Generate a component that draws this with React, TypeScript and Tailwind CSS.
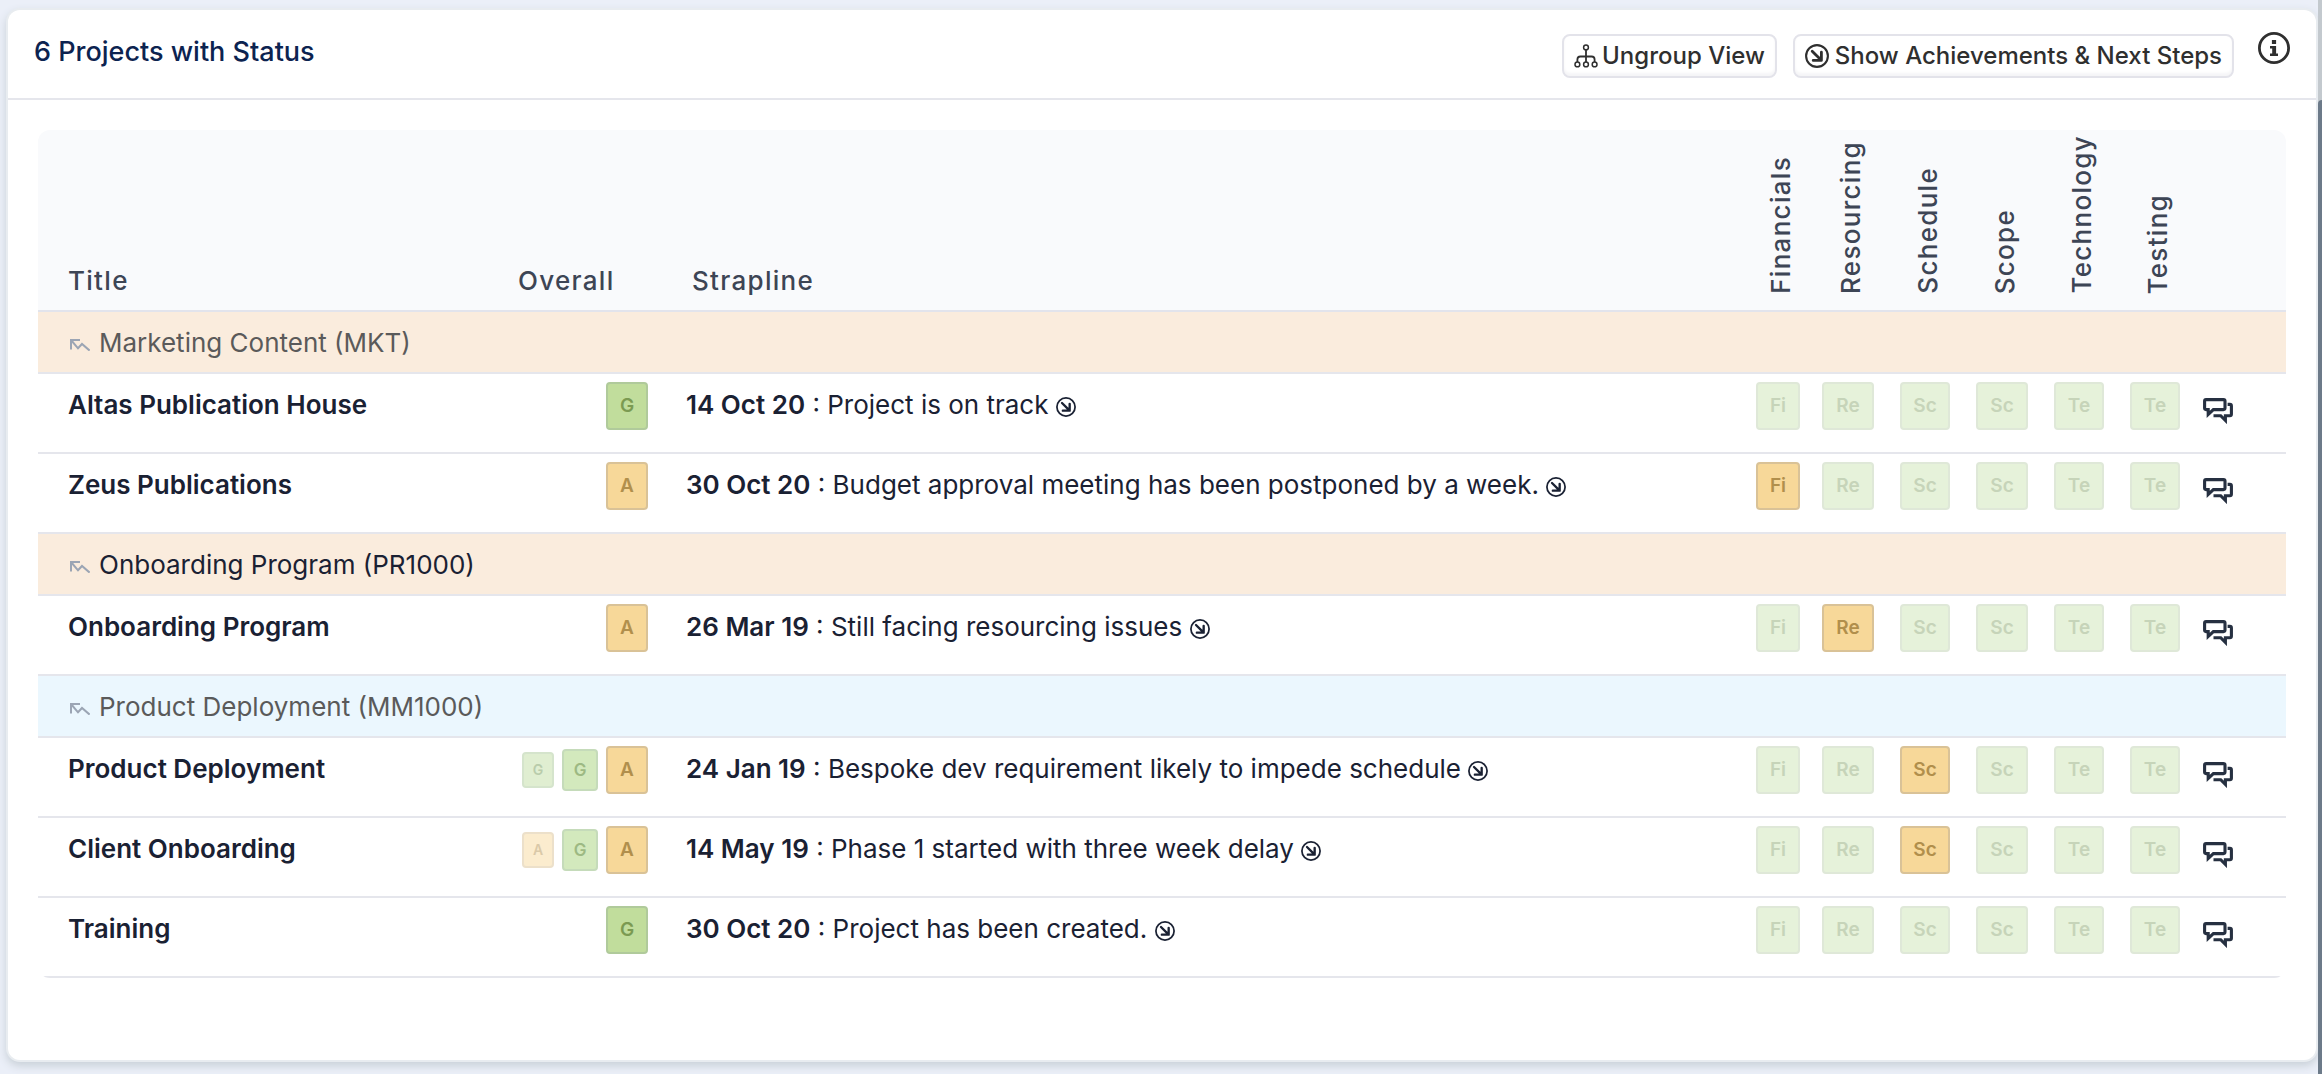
import type { ReactNode } from "react";

type Rag = "G" | "A";

type Project = {
  title: string;
  history: Rag[];
  date: string;
  strapline: string;
  flagged?: number;
};

type Group = { name: string; tone: string; text: string; projects: Project[] };

const groups: Group[] = [
  {
    name: "Marketing Content (MKT)",
    tone: "bg-[#faecdd]",
    text: "text-[#5a5a5a]",
    projects: [
      { title: "Altas Publication House", history: ["G"], date: "14 Oct 20", strapline: "Project is on track" },
      {
        title: "Zeus Publications",
        history: ["A"],
        date: "30 Oct 20",
        strapline: "Budget approval meeting has been postponed by a week.",
        flagged: 0,
      },
    ],
  },
  {
    name: "Onboarding Program (PR1000)",
    tone: "bg-[#faecdd]",
    text: "text-[#1a2133]",
    projects: [
      { title: "Onboarding Program", history: ["A"], date: "26 Mar 19", strapline: "Still facing resourcing issues", flagged: 1 },
    ],
  },
  {
    name: "Product Deployment (MM1000)",
    tone: "bg-[#ebf7fe]",
    text: "text-[#5a5a5a]",
    projects: [
      {
        title: "Product Deployment",
        history: ["G", "G", "A"],
        date: "24 Jan 19",
        strapline: "Bespoke dev requirement likely to impede schedule",
        flagged: 2,
      },
      {
        title: "Client Onboarding",
        history: ["A", "G", "A"],
        date: "14 May 19",
        strapline: "Phase 1 started with three week delay",
        flagged: 2,
      },
      { title: "Training", history: ["G"], date: "30 Oct 20", strapline: "Project has been created." },
    ],
  },
];

const areas = [
  { name: "Financials", code: "Fi", badge: "w-11" },
  { name: "Resourcing", code: "Re", badge: "w-[52px]" },
  { name: "Schedule", code: "Sc", badge: "w-[50px]" },
  { name: "Scope", code: "Sc", badge: "w-[52px]" },
  { name: "Technology", code: "Te", badge: "w-[50px]" },
  { name: "Testing", code: "Te", badge: "w-[50px]" },
];

const current: Record<Rag, string> = {
  G: "border-[#b0ca9b] bg-[#c1dd9c] text-[#7b9a52]",
  A: "border-[#d9c297] bg-[#f7d899] text-[#b18f4c]",
};
const previous: Record<Rag, string> = {
  G: "border-[#c5dbba] bg-[#d3e9bd] text-[#9db983]",
  A: "border-[#e3d2b0] bg-[#fae3b6] text-[#c8b080]",
};
const oldest: Record<Rag, string> = {
  G: "border-[#d5e4cc] bg-[#e0eed1] text-[#b9ccab]",
  A: "border-[#ece0ca] bg-[#fbecce] text-[#dac9a8]",
};

function Badge({ className, children }: { className: string; children: ReactNode }) {
  return (
    <span className={`flex items-center justify-center rounded border-2 font-semibold ${className}`}>{children}</span>
  );
}

function History({ history }: { history: Rag[] }) {
  return (
    <div className="flex h-12 items-center justify-end gap-2">
      {history.map((rag, i) => {
        const age = history.length - 1 - i;
        if (age === 0) return <Badge key={i} className={`h-12 w-[42px] text-[19px] ${current[rag]}`}>{rag}</Badge>;
        if (age === 1) return <Badge key={i} className={`h-[42px] w-9 text-[17px] ${previous[rag]}`}>{rag}</Badge>;
        return <Badge key={i} className={`h-9 w-8 text-[14px] ${oldest[rag]}`}>{rag}</Badge>;
      })}
    </div>
  );
}

function HierarchyIcon() {
  return (
    <svg viewBox="0 0 24 24" className="h-6 w-6" fill="none" stroke="currentColor" strokeWidth="1.5" aria-hidden="true">
      <circle cx="12" cy="3.4" r="2.4" />
      <circle cx="3.4" cy="20.4" r="2.4" />
      <circle cx="12" cy="20.4" r="2.4" />
      <circle cx="20.6" cy="20.4" r="2.4" />
      <path d="M12 6v12M3.4 18v-2.500q0-3 3-3h11.200q3 0 3 3V18" strokeWidth="1.800" />
    </svg>
  );
}

function ArrowCircleIcon({ className }: { className: string }) {
  return (
    <svg viewBox="0 0 24 24" className={className} fill="none" stroke="currentColor" aria-hidden="true">
      <circle cx="12" cy="12" r="10.9" strokeWidth="2.1" />
      <path d="M7.2 7.2l8.6 8.6M16.4 8.2v8.2H8.2" strokeWidth="2.800" strokeLinecap="round" strokeLinejoin="round" />
    </svg>
  );
}

function InfoIcon() {
  return (
    <svg viewBox="0 0 32 32" className="h-8 w-8" aria-hidden="true">
      <circle cx="16" cy="16" r="14.6" fill="none" stroke="currentColor" strokeWidth="2.8" />
      <path d="M13.9 8h4.2v4h-4.2zM12 14h6.1v7.6H20V24h-8v-2.4h2.2v-5.2H12z" fill="currentColor" />
    </svg>
  );
}

function TrendIcon() {
  return (
    <svg viewBox="0 0 20 12" className="mt-1 h-3 w-5" fill="none" stroke="currentColor" strokeWidth="2" aria-hidden="true">
      <path d="M1 10.5V1h9M1 1l7 8.3 4-4.3 7.6 6.6" />
    </svg>
  );
}

function DiscussionIcon() {
  return (
    <svg viewBox="0 0 30 26" className="h-[26px] w-[30px]" fill="none" stroke="currentColor" strokeWidth="3.1" aria-hidden="true">
      <path d="M1.600 3q0-1.400 1.400-1.400h17.500q1.500 0 1.500 1.500v7q0 1.500-1.500 1.500H10.400L5.200 16.400v-4.800H3q-1.400 0-1.400-1.500z" />
      <path d="M24.600 6.400h2.300q1.500 0 1.500 1.500v8.300q0 1.500-1.500 1.500h-4.500v4.700l-4.700-4.700h-7.200" />
    </svg>
  );
}

const toolbarButton =
  "flex h-11 items-center rounded-lg border-2 border-[#e3e3ea] bg-white px-[10px] text-[24px] font-medium text-[#2f2f2f] shadow-[inset_0_-3px_3px_#f5f5f7]";

function Header() {
  return (
    <header className="flex items-start justify-between border-b-2 border-[#e5e6ec] px-[26px]">
      <h1 className="pt-[22px] pb-[26px] text-[27px] leading-10 font-medium text-[#0c2350]">6 Projects with Status</h1>
      <div className="flex items-start pt-[22px]">
        <button type="button" className={`mt-[2px] mr-4 gap-1 ${toolbarButton}`}>
          <HierarchyIcon />
          Ungroup View
        </button>
        <button type="button" className={`mt-[2px] mr-6 gap-[6px] ${toolbarButton}`}>
          <ArrowCircleIcon className="h-6 w-6" />
          Show Achievements &amp; Next Steps
        </button>
        <button type="button" aria-label="Information" className="text-[#2f2f2f]">
          <InfoIcon />
        </button>
      </div>
    </header>
  );
}

function ProjectRow({ project }: { project: Project }) {
  return (
    <tr className="h-20 border-b-2 border-[#e5e6ec] align-top">
      <td className="pt-[11px] pl-[30px] font-semibold">{project.title}</td>
      <td className="pt-2 pr-5">
        <History history={project.history} />
      </td>
      <td className="pt-[11px] pl-[18px]">
        <span className="font-semibold">{project.date}</span> : {project.strapline}{" "}
        <button type="button" aria-label="Show details" className="align-middle">
          <ArrowCircleIcon className="h-5 w-5" />
        </button>
      </td>
      {areas.map((area, i) => (
        <td key={area.name} className="pt-2 pl-3">
          <Badge
            className={`h-12 text-[19px] ${area.badge} ${
              project.flagged === i ? current.A : "border-[#dfe8d8] bg-[#e6f2da] text-[#c6d4b9]"
            }`}
          >
            {area.code}
          </Badge>
        </td>
      ))}
      <td className="pt-6 pl-[11px]">
        <button type="button" aria-label="Comments" className="block text-[#263041]">
          <DiscussionIcon />
        </button>
      </td>
    </tr>
  );
}

function StatusTable() {
  return (
    <div className="overflow-hidden rounded-xl">
      <table className="w-full table-fixed border-collapse text-left text-[26px] leading-10 text-[#1a2133]">
        <colgroup>
          <col className="w-[464px]" />
          <col className="w-[166px]" />
          <col />
          <col className="w-[66px]" />
          <col className="w-[78px]" />
          <col className="w-[76px]" />
          <col className="w-[78px]" />
          <col className="w-[76px]" />
          <col className="w-[74px]" />
          <col className="w-[94px]" />
        </colgroup>
        <thead>
          <tr className="h-[181px] border-b-2 border-[#e2e4ec] bg-[#f9fafc] align-bottom tracking-wider text-[#3d4555]">
            <th className="pb-[9px] pl-[30px] font-medium">Title</th>
            <th className="pb-[9px] pl-4 font-medium">Overall</th>
            <th className="pb-[9px] pl-6 font-medium">Strapline</th>
            {areas.map((area) => (
              <th key={area.name} className="pb-4 pl-[15px] font-medium">
                <div className={`flex justify-center ${area.badge}`}>
                  <span className="rotate-180 leading-7 [writing-mode:vertical-rl]">{area.name}</span>
                </div>
              </th>
            ))}
            <th aria-label="Comments" />
          </tr>
        </thead>
        {groups.map((group) => (
          <tbody key={group.name}>
            <tr className={`h-[62px] border-b-2 border-[#e5e6ec] ${group.tone}`}>
              <th colSpan={10} scope="rowgroup" className={`pt-[2px] pl-8 font-normal ${group.text}`}>
                <div className="flex items-center gap-[9px]">
                  <span className="text-[#9ba5b4]">
                    <TrendIcon />
                  </span>
                  {group.name}
                </div>
              </th>
            </tr>
            {group.projects.map((project) => (
              <ProjectRow key={project.title} project={project} />
            ))}
          </tbody>
        ))}
      </table>
    </div>
  );
}

export default function App() {
  return (
    <div className="flex min-h-screen bg-[#ebeff8] font-['Inter',sans-serif]">
      <main className="min-w-0 flex-1 pt-[10px] pr-[2px] pb-3 pl-2">
        <section className="rounded-xl bg-white shadow-[0_0_0_2px_#e8ecf0,0_4px_8px_2px_#c9d1d8]">
          <Header />
          <div className="px-[30px] pt-[30px] pb-[82px]">
            <StatusTable />
          </div>
        </section>
      </main>
      <div className="flex w-1 flex-col bg-[#c3c9ce] pt-[100px]" aria-hidden="true">
        <div className="flex-1 rounded-tl bg-[#6c7a89]" />
      </div>
    </div>
  );
}
